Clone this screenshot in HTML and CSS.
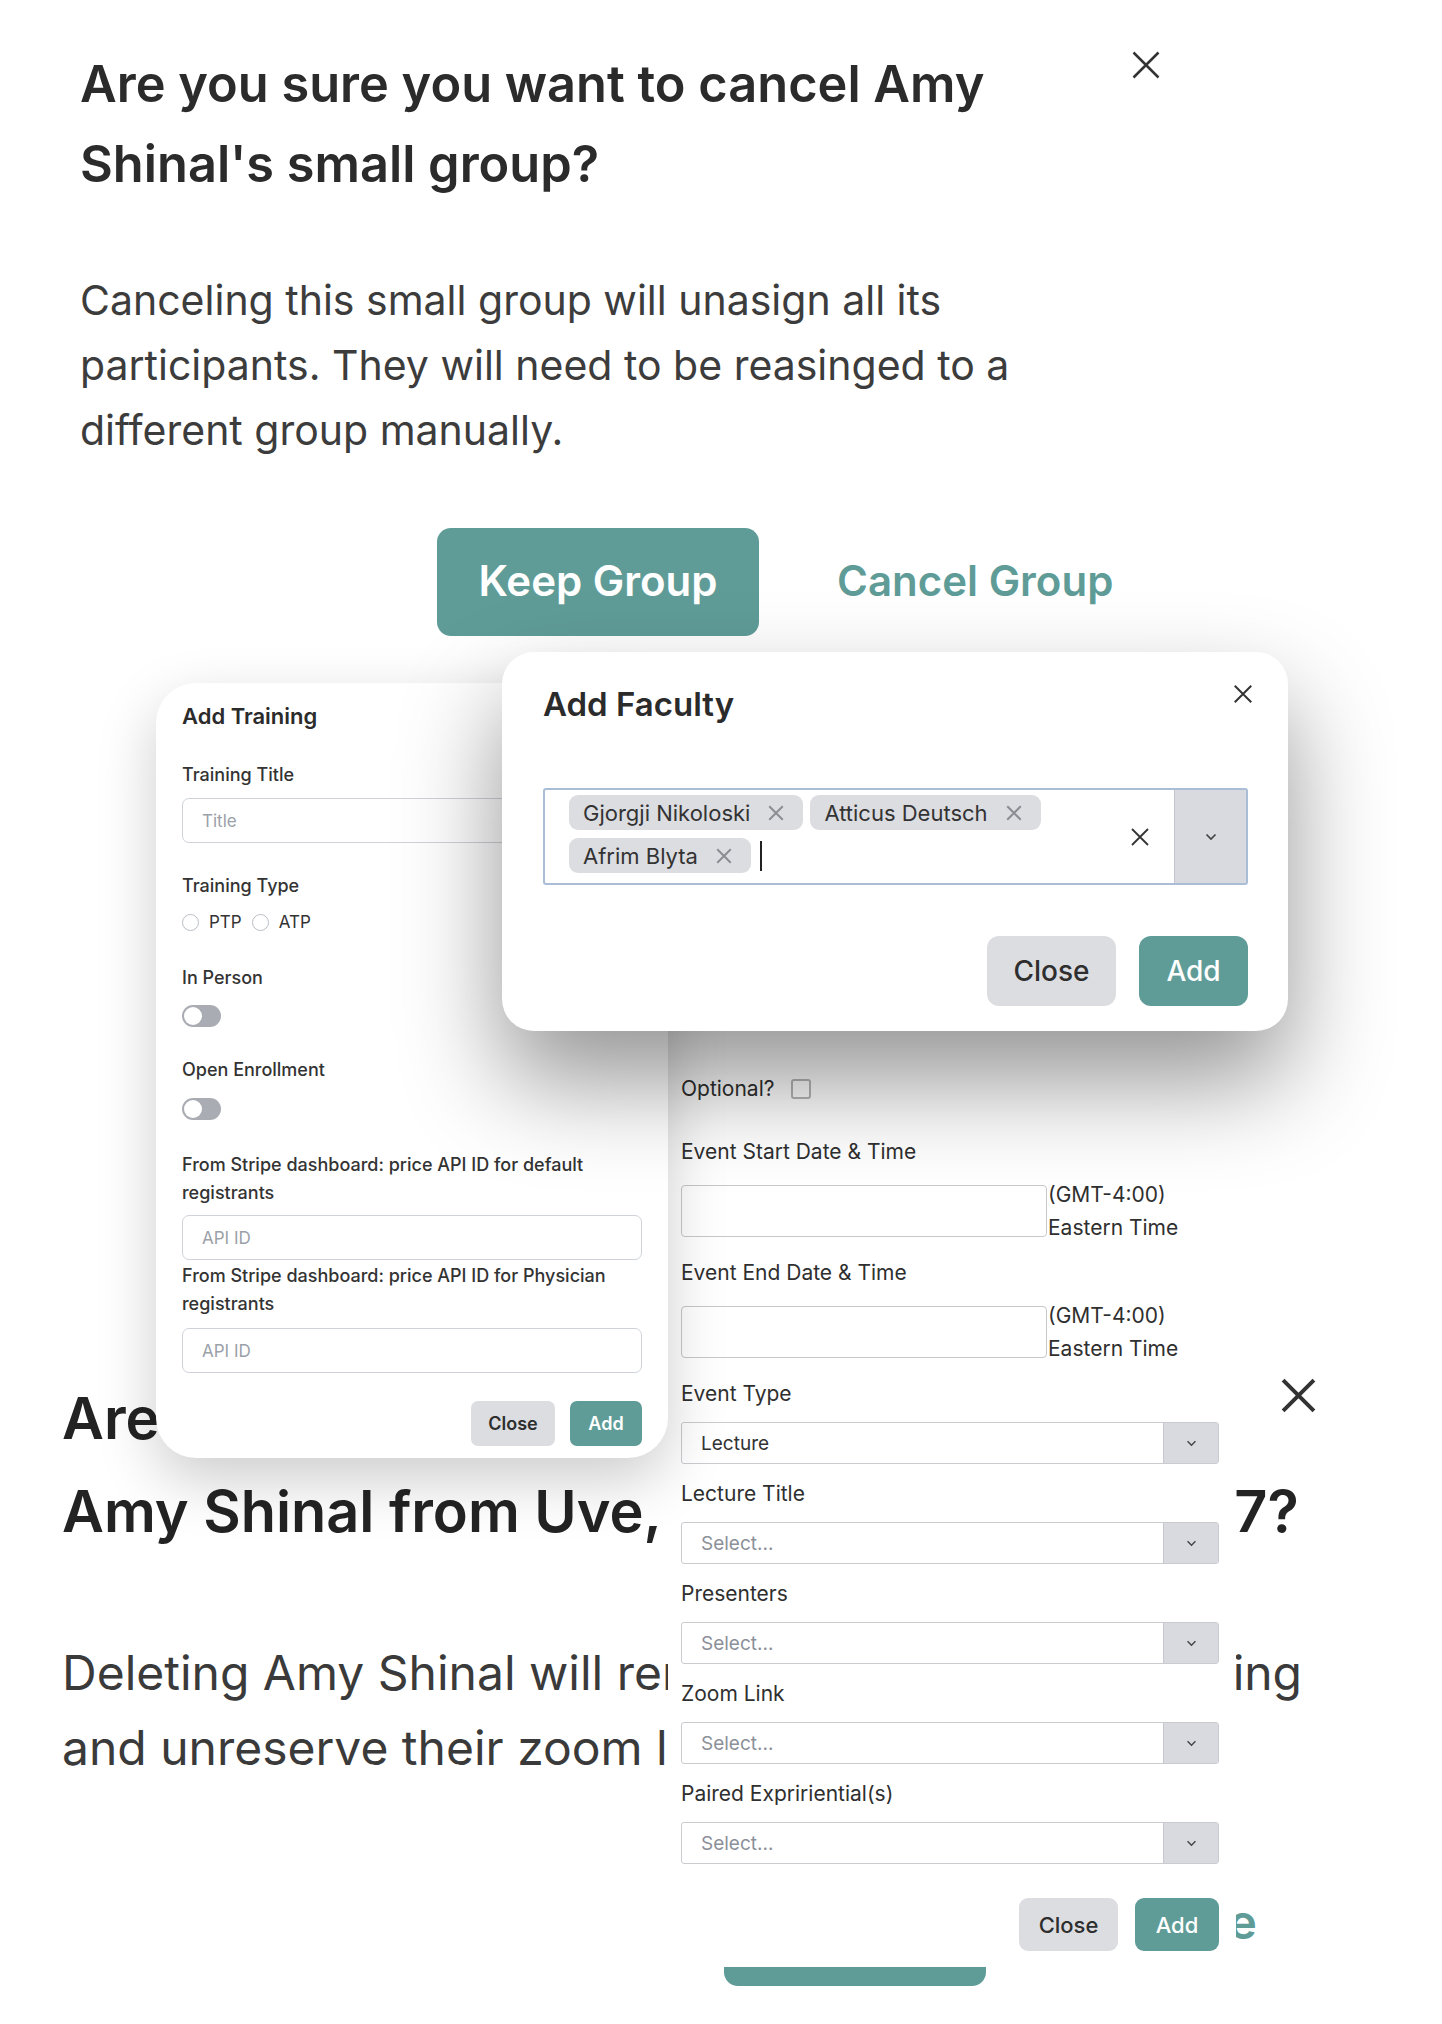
FILE: index.html
```html
<!DOCTYPE html>
<html lang="en">
<head>
<meta charset="utf-8">
<title>Modals</title>
<link rel="stylesheet" href="styles.css">
</head>
<body>
<div class="canvas">

  <section class="win win-delete">
    <h2 class="del-title">Are you sure you want to remove<br>Amy Shinal from Uve, Small Group Cohort 7?</h2>
    <p class="del-text">Deleting Amy Shinal will remove them from the training<br>and unreserve their zoom link.</p>
    <div class="del-actions">
      <button class="btn-del-keep">Keep</button>
      <button class="btn-del-link">Delete</button>
    </div>
    <button class="x-del" aria-label="Close">
      <svg viewBox="0 0 24 24" width="37" height="37"><path d="M2 2L22 22M22 2L2 22" stroke="#333" stroke-width="2.6"/></svg>
    </button>
  </section>

  <section class="win win-cancel">
    <h2 class="cancel-title">Are you sure you want to cancel Amy<br>Shinal's small group?</h2>
    <p class="cancel-text">Canceling this small group will unasign all its<br>participants. They will need to be reasinged to a<br>different group manually.</p>
    <div class="cancel-actions">
      <button class="btn-keep">Keep Group</button>
      <button class="btn-cancel-link">Cancel Group</button>
    </div>
    <button class="x-cancel" aria-label="Close">
      <svg viewBox="0 0 24 24" width="30" height="30"><path d="M2 2L22 22M22 2L2 22" stroke="#333" stroke-width="2"/></svg>
    </button>
  </section>

  <section class="win win-event">
    <div class="ev-opt">
      <span>Optional?</span>
      <span class="checkbox"></span>
    </div>
    <label class="ev-label ev-first">Event Start Date &amp; Time</label>
    <div class="ev-date">
      <div class="date-input"></div>
      <div class="tz">(GMT-4:00)<br>Eastern Time</div>
    </div>
    <label class="ev-label ev-after-date">Event End Date &amp; Time</label>
    <div class="ev-date">
      <div class="date-input"></div>
      <div class="tz">(GMT-4:00)<br>Eastern Time</div>
    </div>
    <label class="ev-label ev-after-date">Event Type</label>
    <div class="select">
      <div class="select-val">Lecture</div>
      <div class="select-caret"><svg viewBox="0 0 12 8" width="11" height="7"><path d="M1.5 1.5L6 6l4.5-4.5" fill="none" stroke="#444" stroke-width="1.6"/></svg></div>
    </div>
    <label class="ev-label">Lecture Title</label>
    <div class="select">
      <div class="select-val ph">Select...</div>
      <div class="select-caret"><svg viewBox="0 0 12 8" width="11" height="7"><path d="M1.5 1.5L6 6l4.5-4.5" fill="none" stroke="#444" stroke-width="1.6"/></svg></div>
    </div>
    <label class="ev-label">Presenters</label>
    <div class="select">
      <div class="select-val ph">Select...</div>
      <div class="select-caret"><svg viewBox="0 0 12 8" width="11" height="7"><path d="M1.5 1.5L6 6l4.5-4.5" fill="none" stroke="#444" stroke-width="1.6"/></svg></div>
    </div>
    <label class="ev-label">Zoom Link</label>
    <div class="select">
      <div class="select-val ph">Select...</div>
      <div class="select-caret"><svg viewBox="0 0 12 8" width="11" height="7"><path d="M1.5 1.5L6 6l4.5-4.5" fill="none" stroke="#444" stroke-width="1.6"/></svg></div>
    </div>
    <label class="ev-label">Paired Expririential(s)</label>
    <div class="select">
      <div class="select-val ph">Select...</div>
      <div class="select-caret"><svg viewBox="0 0 12 8" width="11" height="7"><path d="M1.5 1.5L6 6l4.5-4.5" fill="none" stroke="#444" stroke-width="1.6"/></svg></div>
    </div>
    <div class="ev-actions">
      <button class="btn-gray ev-close">Close</button>
      <button class="btn-teal ev-add">Add</button>
    </div>
  </section>

  <section class="win win-training">
    <h3 class="tr-title">Add Training</h3>
    <label class="tr-label tr-l1">Training Title</label>
    <div class="tr-input tr-i1">Title</div>
    <label class="tr-label tr-l2">Training Type</label>
    <div class="tr-radios">
      <span class="radio"></span><span class="radio-text">PTP</span>
      <span class="radio"></span><span class="radio-text">ATP</span>
    </div>
    <label class="tr-label tr-l3">In Person</label>
    <div class="toggle tr-t1"></div>
    <label class="tr-label tr-l4">Open Enrollment</label>
    <div class="toggle tr-t2"></div>
    <label class="tr-label tr-l5">From Stripe dashboard: price API ID for default registrants</label>
    <div class="tr-input tr-i2">API ID</div>
    <label class="tr-label tr-l6">From Stripe dashboard: price API ID for Physician registrants</label>
    <div class="tr-input tr-i3">API ID</div>
    <div class="tr-actions">
      <button class="btn-gray tr-close">Close</button>
      <button class="btn-teal tr-add">Add</button>
    </div>
  </section>

  <section class="win win-faculty">
    <h3 class="fac-title">Add Faculty</h3>
    <button class="x-fac" aria-label="Close">
      <svg viewBox="0 0 24 24" width="22" height="22"><path d="M3 3L21 21M21 3L3 21" stroke="#333" stroke-width="2.2"/></svg>
    </button>
    <div class="multi">
      <div class="multi-values">
        <span class="chip">Gjorgji Nikoloski<svg viewBox="0 0 16 16" width="18" height="18"><path d="M2 2L14 14M14 2L2 14" stroke="#8a8d93" stroke-width="1.8"/></svg></span>
        <span class="chip">Atticus Deutsch<svg viewBox="0 0 16 16" width="18" height="18"><path d="M2 2L14 14M14 2L2 14" stroke="#8a8d93" stroke-width="1.8"/></svg></span>
        <span class="chip">Afrim Blyta<svg viewBox="0 0 16 16" width="18" height="18"><path d="M2 2L14 14M14 2L2 14" stroke="#8a8d93" stroke-width="1.8"/></svg></span>
        <span class="caret"></span>
      </div>
      <div class="multi-clear"><svg viewBox="0 0 20 20" width="20" height="20"><path d="M2 2L18 18M18 2L2 18" stroke="#333" stroke-width="1.8"/></svg></div>
      <div class="multi-caret"><svg viewBox="0 0 12 8" width="12" height="8"><path d="M1.5 1.5L6 6l4.5-4.5" fill="none" stroke="#444" stroke-width="1.7"/></svg></div>
    </div>
    <div class="fac-actions">
      <button class="btn-gray fac-close">Close</button>
      <button class="btn-teal fac-add">Add</button>
    </div>
  </section>

</div>
</body>
</html>
```

FILE: styles.css
```css
* { box-sizing: border-box; margin: 0; padding: 0; }
body { margin: 0; background: #fff; font-family: Inter, "Noto Sans", Arial, sans-serif; color: #2b2b2b; }
button { font-family: inherit; border: 0; background: none; cursor: pointer; color: inherit; }
label { display: block; }

.canvas { position: relative; width: 1442px; height: 2024px; overflow: hidden; background: #fff; }
.win { position: absolute; background: #fff; }

/* shared buttons */
.btn-gray { background: #dcdde1; color: #2e2e2e; }
.btn-teal { background: #5f9c98; color: #fff; }

/* ---------- lower delete modal ---------- */
.win-delete { left: 0; top: 1340px; width: 1442px; height: 684px; padding: 32px 0 0 62px; }
.del-title { font-size: 57.6px; line-height: 93px; font-weight: 600; color: #232323; white-space: nowrap; }
.del-text { margin-top: 77px; font-size: 48px; line-height: 75px; color: #3a3a3a; white-space: nowrap; }
.del-actions { display: flex; align-items: center; margin-top: 81px; padding-left: 662px; gap: 122px; }
.btn-del-keep { width: 262px; height: 120px; border-radius: 14px; background: #5f9c98; color: #fff; font-size: 44px; font-weight: 600; white-space: nowrap; }
.btn-del-link { color: #5f9c98; font-size: 48px; font-weight: 600; white-space: nowrap; margin-top: -10px; }
.x-del { position: absolute; left: 1280px; top: 37px; width: 37px; height: 37px; display: flex; }

/* ---------- top cancel modal ---------- */
.win-cancel { left: 0; top: 0; width: 1442px; height: 700px; padding: 44px 0 0 80px; }
.cancel-title { font-size: 50.5px; line-height: 80px; font-weight: 600; color: #2b2b2b; white-space: nowrap; }
.cancel-text { margin-top: 64px; font-size: 41px; line-height: 65px; color: #3c3c3c; white-space: nowrap; }
.cancel-actions { display: flex; align-items: center; margin-top: 65px; padding-left: 357px; gap: 78px; }
.btn-keep { width: 322px; height: 108px; border-radius: 14px; background: #5f9c98; color: #fff; font-size: 42px; font-weight: 600; padding-bottom: 4px; }
.btn-cancel-link { color: #5f9c98; font-size: 42px; font-weight: 600; padding-bottom: 4px; }
.x-cancel { position: absolute; left: 1131px; top: 50px; width: 30px; height: 30px; display: flex; }

/* ---------- event modal ---------- */
.win-event { left: 668px; top: 1000px; width: 568px; height: 967px; padding: 74px 17px 0 13px; color: #2f2f2f; font-size: 21px; }
.ev-opt { display: flex; align-items: center; gap: 16px; height: 30px; line-height: 30px; }
.checkbox { width: 20px; height: 20px; border: 2px solid #b7b7b7; border-radius: 3px; background: #fff; }
.ev-label { line-height: 30px; margin-top: 15px; }
.ev-first { margin-top: 33px; }
.ev-after-date { margin-top: 14px; }
.ev-date { display: flex; align-items: flex-start; margin-top: 18px; }
.date-input { width: 366px; height: 52px; border: 1.5px solid #c8c8c8; border-radius: 4px; background: #fff; }
.tz { margin-top: -7px; line-height: 33px; font-size: 21px; padding-left: 1px; }
.select { display: flex; height: 42px; margin-top: 13px; border: 1.5px solid #c9cbcf; border-radius: 3px; background: #fff; }
.select-val { flex: 1; padding-left: 19px; display: flex; align-items: center; font-size: 19px; color: #333; }
.select-val.ph { color: #8b9099; }
.select-caret { width: 55px; background: #d9dadf; border-left: 1px solid #c5c8cd; display: flex; align-items: center; justify-content: center; }
.ev-actions { display: flex; justify-content: flex-end; gap: 17px; margin-top: 34px; }
.ev-close, .ev-add { height: 53px; border-radius: 9px; font-size: 22px; font-weight: 500; }
.ev-close { width: 99px; }
.ev-add { width: 84px; }

/* ---------- add training modal ---------- */
.win-training { left: 156px; top: 683px; width: 512px; height: 775px; border-radius: 40px; padding: 18px 26px 0 26px; box-shadow: 0 22px 60px rgba(0,0,0,.2); }
.tr-title { font-size: 22px; font-weight: 600; line-height: 30px; color: #2b2b2b; }
.tr-label { font-size: 18px; font-weight: 500; line-height: 28px; color: #333; }
.tr-l1 { margin-top: 30px; }
.tr-input { height: 45px; border: 1.5px solid #cfd3d9; border-radius: 7px; padding-left: 19px; display: flex; align-items: center; font-size: 17px; color: #9ba1a9; }
.tr-i1 { margin-top: 9px; }
.tr-l2 { margin-top: 29px; }
.tr-radios { display: flex; align-items: center; height: 28px; margin-top: 8px; font-size: 17px; color: #333; }
.radio { width: 17px; height: 17px; border: 1.5px solid #b9bdc4; border-radius: 50%; margin-right: 10px; }
.radio-text { margin-right: 10px; }
.tr-l3 { margin-top: 28px; }
.toggle { position: relative; width: 39px; height: 22px; border-radius: 11px; background: #a9acb3; }
.toggle::after { content: ""; position: absolute; left: 2px; top: 2px; width: 18px; height: 18px; border-radius: 50%; background: #fff; }
.tr-t1 { margin-top: 13px; }
.tr-l4 { margin-top: 29px; }
.tr-t2 { margin-top: 14px; }
.tr-l5 { margin-top: 31px; }
.tr-i2 { margin-top: 8px; }
.tr-l6 { margin-top: 2px; }
.tr-i3 { margin-top: 10px; }
.tr-actions { display: flex; justify-content: flex-end; gap: 15px; margin-top: 28px; }
.tr-close, .tr-add { height: 45px; border-radius: 7px; font-size: 18px; font-weight: 600; }
.tr-close { width: 84px; }
.tr-add { width: 72px; }

/* ---------- add faculty modal ---------- */
.win-faculty { left: 502px; top: 652px; width: 786px; height: 379px; border-radius: 32px; padding: 32px 40px 0 41px; box-shadow: 0 50px 100px rgba(0,0,0,.42); }
.fac-title { font-size: 33px; font-weight: 600; line-height: 40px; color: #2b2b2b; }
.x-fac { position: absolute; left: 730px; top: 31px; width: 22px; height: 22px; display: flex; }
.multi { display: flex; height: 97px; margin-top: 64px; border: 2px solid #aabdd7; border-radius: 3px; }
.multi-values { flex: 1; display: flex; flex-wrap: wrap; align-content: flex-start; align-items: center; gap: 8px 7px; padding: 5px 0 0 24px; }
.chip { display: inline-flex; align-items: center; gap: 17px; height: 35px; padding: 0 18px 0 14px; border-radius: 9px; background: #dcdde1; font-size: 22px; color: #333; }
.caret { width: 2px; height: 30px; background: #222; margin-left: 2px; }
.multi-clear { width: 76px; display: flex; align-items: center; justify-content: center; padding-left: 8px; }
.multi-caret { width: 72px; background: #d9dadf; border-left: 1px solid #c3c6cc; display: flex; align-items: center; justify-content: center; }
.fac-actions { display: flex; justify-content: flex-end; gap: 23px; margin-top: 51px; }
.fac-close, .fac-add { height: 70px; border-radius: 12px; font-size: 28px; font-weight: 500; }
.fac-close { width: 129px; }
.fac-add { width: 109px; }
```
